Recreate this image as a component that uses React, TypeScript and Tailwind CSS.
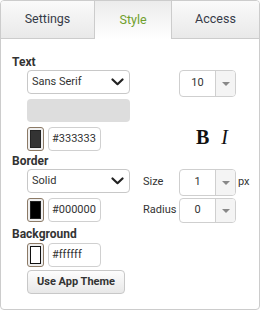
import React from "react";

function Chevron() {
  return (
    <svg width="13" height="8" viewBox="0 0 13 8" className="shrink-0">
      <path d="M1.5 1.5 L6.5 6.2 L11.5 1.5" fill="none" stroke="#222" strokeWidth="2.2" strokeLinecap="round" strokeLinejoin="round" />
    </svg>
  );
}

function Select({ value }: { value: string }) {
  return (
    <div className="flex h-[24px] w-[103px] items-center justify-between rounded-[4px] border border-[#c8c8c8] bg-white pl-[4px] pr-[5px] text-[11px] text-[#333]">
      <span>{value}</span>
      <Chevron />
    </div>
  );
}

function NumSelect({ value, h }: { value: string; h: string }) {
  return (
    <div className={`flex w-[57px] overflow-hidden rounded-[4px] border border-[#cfcfcf] bg-white ${h}`}>
      <div className="flex w-[35px] items-center justify-center text-[11px] text-[#333]">{value}</div>
      <div className="flex flex-1 items-center justify-center border-l border-[#cfcfcf] bg-[#f4f4f4]">
        <svg width="8" height="4" viewBox="0 0 8 4">
          <path d="M0 0 L8 0 L4 4 Z" fill="#888" />
        </svg>
      </div>
    </div>
  );
}

function ColorRow({ color, text, inner }: { color: string; text: string; inner: string }) {
  return (
    <div className="flex h-[24px] items-center gap-[4px]">
      <div className="flex h-[24px] w-[17px] items-center justify-center rounded-[3px] border border-[#8c7a66] bg-[#efefef]">
        <div className={`h-[18px] w-[11px] border ${inner}`} style={{ backgroundColor: color }} />
      </div>
      <div className="flex h-[24px] w-[53px] items-center rounded-[4px] border border-[#d0d0d0] bg-white pl-[3px] text-[11px] text-[#333]">
        {text}
      </div>
    </div>
  );
}

export default function App() {
  return (
    <div className="h-[312px] w-[262px] bg-white" style={{ fontFamily: "Roboto, 'Liberation Sans', sans-serif" }}>
      <div className="flex h-[310px] w-[260px] flex-col overflow-hidden rounded-[4px] border border-[#cccccc] bg-white">
        <div className="flex h-[38px] shrink-0 text-[12.5px]">
          <div className="flex w-[94px] items-center justify-center border-b border-r border-[#cccccc] bg-gradient-to-b from-[#fafafa] to-[#e9e9e9] text-[#363b48]">
            Settings
          </div>
          <div className="flex w-[77px] items-center justify-center border-r border-[#cccccc] bg-gradient-to-b from-[#ececec] to-[#ffffff] text-[#6f9f2c]">
            Style
          </div>
          <div className="flex flex-1 items-center justify-center border-b border-[#cccccc] bg-gradient-to-b from-[#fafafa] to-[#e9e9e9] text-[#363b48]">
            Access
          </div>
        </div>

        <div className="flex flex-col pl-[11px] pt-[15px] text-[#333]">
          <div className="h-[16px] text-[12px] font-bold leading-[16px]">Text</div>
          <div className="flex">
            <div className="ml-[15px] flex w-[103px] flex-col gap-[5px]">
              <Select value="Sans Serif" />
              <div className="h-[23px] rounded-[4px] bg-[#dddddd]" />
              <ColorRow color="#333333" text="#333333" inner="border-[#222]" />
            </div>
            <div className="ml-[49px] flex flex-col">
              <NumSelect value="10" h="h-[27px]" />
              <div className="mt-[29px] flex items-baseline gap-[12px] pl-[17px] text-[20px] leading-[22px] text-[#111]" style={{ fontFamily: "'Liberation Serif', serif" }}>
                <span className="font-bold">B</span>
                <span className="italic">I</span>
              </div>
            </div>
          </div>

          <div className="mt-[2px] h-[16px] text-[12px] font-bold leading-[16px]">Border</div>
          <div className="flex">
            <div className="ml-[15px] flex w-[103px] flex-col gap-[5px]">
              <Select value="Solid" />
              <ColorRow color="#000000" text="#000000" inner="border-[#222]" />
            </div>
            <div className="ml-[13px] flex flex-col gap-[2px] text-[11px]">
              <div className="flex h-[27px] items-center">
                <span className="w-[36px]">Size</span>
                <NumSelect value="1" h="h-[27px]" />
                <span className="ml-[2px]">px</span>
              </div>
              <div className="flex h-[25px] items-center">
                <span className="w-[36px]">Radius</span>
                <NumSelect value="0" h="h-[25px]" />
              </div>
            </div>
          </div>

          <div className="mt-[3px] h-[17px] text-[12px] font-bold leading-[17px]">Background</div>
          <div className="ml-[15px] flex flex-col gap-[3px]">
            <ColorRow color="#ffffff" text="#ffffff" inner="border-[#111]" />
            <div className="flex h-[24px] w-[98px] items-center justify-center rounded-[4px] border border-[#c8c8c8] bg-gradient-to-b from-[#fdfdfd] to-[#e8e8e8] text-[11px] font-bold text-[#333]">
              Use App Theme
            </div>
          </div>
        </div>
      </div>
    </div>
  );
}
